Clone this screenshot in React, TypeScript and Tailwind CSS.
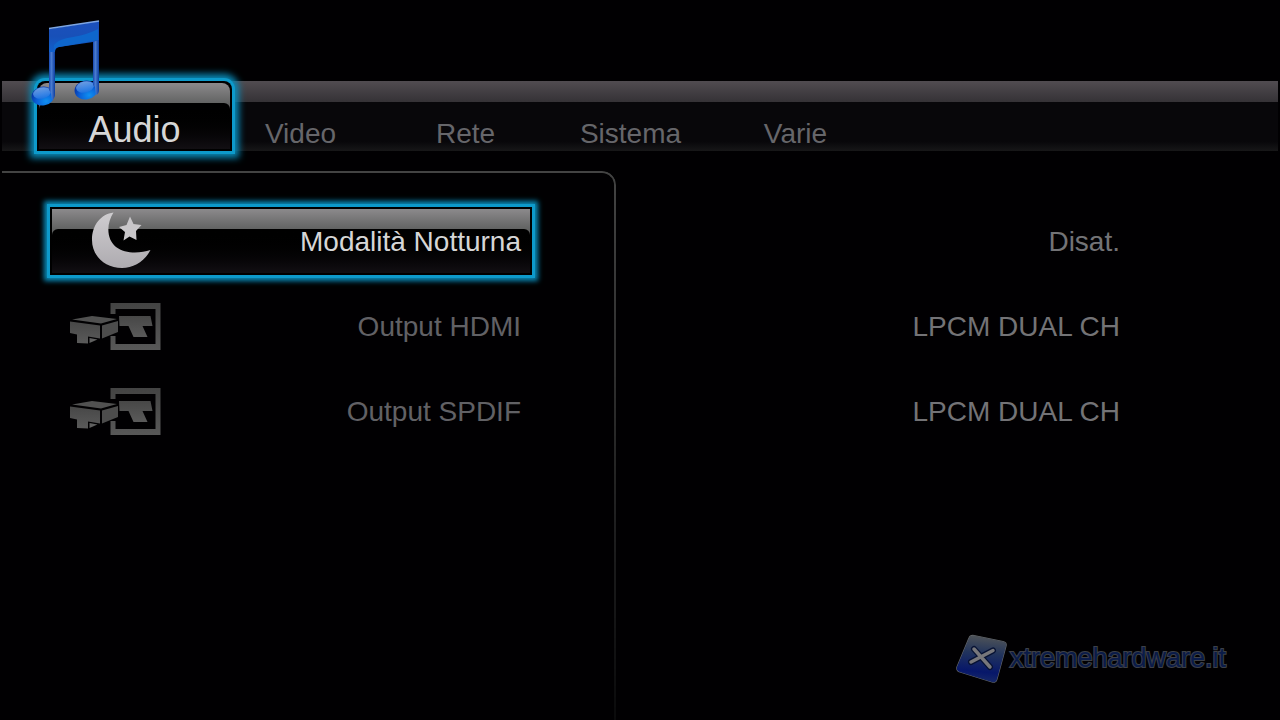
import React, { useState } from 'react';
import clsx from 'clsx';

interface Setting {
  id: string;
  label: string;
  value: string;
  icon: React.FC;
}

const MusicIcon: React.FC = () => (
  <svg viewBox="0 0 72 90" className="w-[72px] h-[90px]" aria-hidden="true">
    <defs>
      <linearGradient id="beam" x1="0" y1="0" x2="0" y2="1">
        <stop offset="0" stopColor="#1c50bc" />
        <stop offset="0.5" stopColor="#1850b8" />
        <stop offset="1" stopColor="#1060cc" />
      </linearGradient>
      <linearGradient id="stem" x1="0" y1="0" x2="1" y2="0">
        <stop offset="0" stopColor="#1648b0" />
        <stop offset="0.4" stopColor="#4a7cd0" />
        <stop offset="1" stopColor="#0c3da0" />
      </linearGradient>
      <radialGradient id="head" cx="0.6" cy="0.8" r="0.7">
        <stop offset="0" stopColor="#1090f0" />
        <stop offset="0.6" stopColor="#0a60d8" />
        <stop offset="1" stopColor="#0838a8" />
      </radialGradient>
      <linearGradient id="shine" x1="0" y1="0" x2="0" y2="1">
        <stop offset="0" stopColor="#8cc0f8" />
        <stop offset="1" stopColor="#2474e0" />
      </linearGradient>
    </defs>
    <ellipse cx="12" cy="76" rx="11.500" ry="9.500" transform="rotate(-10 12 76)" fill="url(#head)" />
    <ellipse cx="11" cy="73" rx="9" ry="5.500" transform="rotate(-12 11 73)" fill="url(#shine)" opacity="0.75" />
    <ellipse cx="55" cy="70" rx="11.500" ry="9.500" transform="rotate(-10 55 70)" fill="url(#head)" />
    <ellipse cx="54" cy="67" rx="9" ry="5.500" transform="rotate(-12 54 67)" fill="url(#shine)" opacity="0.75" />
    <path d="M18 20h6v54q0 4-3 6l-1-7l-2-3z" fill="url(#stem)" />
    <path d="M62 14l6-6v62q0 4-3 5l-1-8l-2-2z" fill="url(#stem)" />
    <path d="M18 9L68 1v19l-6 2-34 5q-4 1-4 5h-6z" fill="url(#beam)" />
    <path d="M23 25Q27 19 42 17Q58 14 67 9v11l-39 7q-4 0-5 4z" fill="#0e66cc" />
    <path d="M18 8.500L68 1" stroke="#7da6e4" strokeWidth="1.500" />
  </svg>
);

const MoonIcon: React.FC = () => (
  <svg viewBox="0 0 92 68" className="w-[92px] h-[68px]" aria-hidden="true">
    <defs>
      <linearGradient id="moon" x1="0" y1="0" x2="0" y2="1">
        <stop offset="0" stopColor="#cfcdd0" />
        <stop offset="1" stopColor="#aeabb0" />
      </linearGradient>
    </defs>
    <path
      d="M43.500 5.500C31 7 22 18 22 33C22 49 35 61 52 61C64 61 75 54 80.500 43C70 46.500 55 47 46 40C36 32 36.500 16 43.500 5.500Z"
      fill="url(#moon)"
    />
    <path
      d="M60 9.500L63.500 17L71.500 18L66 24L66.500 33L59.500 29.500L53.500 33.500L55 25L49 20L56.500 18Z"
      fill="#c8c6c9"
    />
  </svg>
);

const OutputIcon: React.FC = () => (
  <svg viewBox="0 0 92 68" className="w-[92px] h-[68px]" aria-hidden="true">
    <defs>
      <linearGradient id="plug" x1="0" y1="0" x2="0" y2="1">
        <stop offset="0" stopColor="#474747" />
        <stop offset="1" stopColor="#5a5a5a" />
      </linearGradient>
      <linearGradient id="port" x1="0" y1="0" x2="0" y2="1">
        <stop offset="0" stopColor="#434343" />
        <stop offset="1" stopColor="#585858" />
      </linearGradient>
    </defs>
    <path d="M40.500 11h50v47h-50v-14h5v8h40v-35h-40v5h-5z" fill="url(#port)" />
    <path d="M49 24h31.500l2 10h-10l5 11h-14l-5-11h-9z" fill="url(#plug)" />
    <path d="M2 27.500L22 24L47 27L31 31.500z" fill="#515151" />
    <path d="M0 29.500L30 33.500v13l-12-2v7l-11-0.500v-8.500l-7-1.500z" fill="url(#plug)" />
    <path d="M32 33.500L48 29v11l-16 6.500z" fill="#4c4c4c" />
    <path d="M19.500 51v-5l8 1.500z" fill="#606060" />
  </svg>
);

const BrandIcon: React.FC = () => (
  <svg viewBox="0 0 52 50" className="w-[52px] h-[50px]" aria-hidden="true">
    <defs>
      <linearGradient id="tile" x1="0.300" y1="0" x2="0.200" y2="1">
        <stop offset="0" stopColor="#4d5258" />
        <stop offset="0.350" stopColor="#22345c" />
        <stop offset="0.750" stopColor="#07176a" />
        <stop offset="1" stopColor="#1a2c68" />
      </linearGradient>
    </defs>
    <path
      d="M18 1.500L47 7.500Q51 8.500 50 12L41 45Q40 49 36 48L4 38Q0 36.500 1 33L13 4Q14 1 18 1.500Z"
      fill="url(#tile)"
      stroke="#626468"
      strokeWidth="1.200"
    />
    <path d="M18 15L34 33M37 16.500L15 28" stroke="#071233" strokeWidth="6" strokeLinecap="round" />
    <path d="M18 15L34 33M37 16.500L15 28" stroke="#77777b" strokeWidth="3.500" strokeLinecap="round" />
  </svg>
);

const tabs = ['Audio', 'Video', 'Rete', 'Sistema', 'Varie'];

const settings: Setting[] = [
  { id: 'night', label: 'Modalità Notturna', value: 'Disat.', icon: MoonIcon },
  { id: 'hdmi', label: 'Output HDMI', value: 'LPCM DUAL CH', icon: OutputIcon },
  { id: 'spdif', label: 'Output SPDIF', value: 'LPCM DUAL CH', icon: OutputIcon }
];

// Glossy strip with the dark rounded face below it
const Gloss: React.FC = () => (
  <span className="absolute inset-0.5 overflow-hidden rounded-t-[inherit] bg-linear-to-b from-[#8c8a8c] to-[#565857] to-[26px]">
    <span className="absolute inset-x-0 top-5 bottom-0 rounded-t-md bg-linear-to-b from-black to-[#120f13]" />
  </span>
);

const App: React.FC = () => {
  const [activeTab, setActiveTab] = useState('Audio');
  const [selected, setSelected] = useState('night');

  return (
    <div className="min-h-screen flex flex-col overflow-hidden bg-[#010002] font-['Liberation_Sans',Arial,sans-serif] text-[28px] leading-8">
      {/* Tabs */}
      <header className="mt-[81px] mx-0.5 h-[70px] bg-linear-to-b from-[#514c51] to-[#353236] to-[21px]">
        <div className="h-full pt-[21px]">
          <div className="h-full bg-linear-to-b from-[#08070a] from-80% to-[#171718]" />
        </div>
        <nav className="relative -mt-[70px] h-[70px] pl-[35px] flex">
          {tabs.map((tab) => (
            <button
              key={tab}
              onClick={() => setActiveTab(tab)}
              className={clsx(
                'relative h-[70px]',
                tab === activeTab
                  ? 'z-10 w-[195px] -mr-[14px] pt-7 rounded-t-lg bg-black text-[36px] text-[#d6d6d6] shadow-[0_0_0_3px_#0d9acb,0_0_7px_7px_#0a8ab8]'
                  : 'w-[165px] pt-9 text-[#66666a]'
              )}
            >
              {tab === activeTab && <Gloss />}
              <span className="relative">{tab}</span>
            </button>
          ))}
          <span className="absolute z-20 left-[29px] -top-[61px] pointer-events-none">
            <MusicIcon />
          </span>
        </nav>
      </header>

      <main className="mt-5 ml-0.5 flex-1 grid grid-cols-[614fr_664fr]">
        {/* Settings */}
        <section className="relative pt-9 pl-12 pr-[84px]">
          <div className="absolute inset-0 rounded-tr-[14px] border-t-2 border-r-2 border-[#434343] mask-linear-180 mask-linear-from-0% mask-linear-to-100% mask-linear-from-black mask-linear-to-black/15 pointer-events-none" />
          <ul className="relative flex flex-col gap-[17px]">
            {settings.map(({ id, label, icon: Icon }) => (
              <li key={id}>
                <button
                  onClick={() => setSelected(id)}
                  className={clsx(
                    'relative w-full h-[68px] pl-5 pr-[11px] flex items-center justify-between',
                    id === selected
                      ? 'bg-black text-[#d6d6d6] shadow-[0_0_0_3px_#0d9acb,0_0_5px_6px_#0a8ab8]'
                      : 'text-[#616165]'
                  )}
                >
                  {id === selected && <Gloss />}
                  <span className="relative">
                    <Icon />
                  </span>
                  <span className="relative pt-0.5">{label}</span>
                </button>
              </li>
            ))}
          </ul>
        </section>

        {/* Values */}
        <section className="pt-9 pb-9 flex flex-col justify-between items-end">
          <ul className="pr-40 flex flex-col gap-[17px] text-right text-[#737376]">
            {settings.map(({ id, value }) => (
              <li key={id} className="h-[68px] pt-0.5 flex items-center justify-end">
                {value}
              </li>
            ))}
          </ul>
          <a
            href="#"
            className="mr-[54px] flex items-center gap-0.5 text-[27px] leading-7 text-[#0a1b49] [-webkit-text-stroke:2px_#3d4048] [paint-order:stroke_fill]"
          >
            <BrandIcon />
            <span className="pb-0.5">xtremehardware.it</span>
          </a>
        </section>
      </main>
    </div>
  );
};

export default App;
